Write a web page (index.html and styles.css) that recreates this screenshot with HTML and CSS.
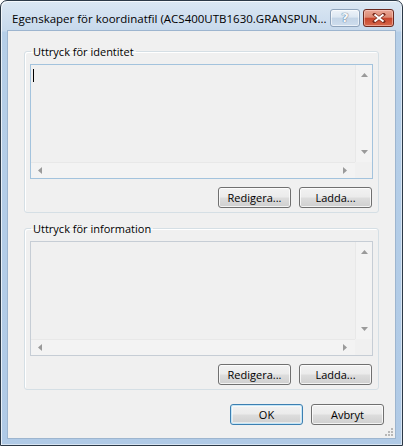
FILE: index.html
```html
<!DOCTYPE html>
<html lang="sv">
<head>
<meta charset="utf-8">
<title>Egenskaper för koordinatfil</title>
<link rel="stylesheet" href="styles.css">
</head>
<body>
<div class="window">
  <div class="titlebar">
    <span class="title">Egenskaper för koordinatfil (ACS400UTB1630.GRANSPUN...</span>
    <div class="caption-buttons">
      <span class="cbtn help">?</span>
      <span class="cbtn close">
        <svg width="14" height="10" viewBox="0 0 14 10"><path d="M2.5 1.5 L11.5 8.5 M11.5 1.5 L2.5 8.5" stroke="#7a2a1c" stroke-width="3.4" stroke-linecap="square"/><path d="M2.5 1.5 L11.5 8.5 M11.5 1.5 L2.5 8.5" stroke="#ffffff" stroke-width="2"/></svg>
      </span>
    </div>
  </div>
  <div class="client">
    <fieldset class="group">
      <legend>Uttryck för identitet</legend>
      <div class="textbox focused">
        <div class="text-content"><span class="caret"></span></div>
        <div class="vscroll">
          <svg width="7" height="4" viewBox="0 0 7 4"><path d="M0 4 L3.5 0 L7 4 Z" fill="#9a9a9a"/></svg>
          <svg width="7" height="4" viewBox="0 0 7 4"><path d="M0 0 L3.5 4 L7 0 Z" fill="#9a9a9a"/></svg>
        </div>
        <div class="hscroll">
          <svg width="4" height="7" viewBox="0 0 4 7"><path d="M4 0 L0 3.5 L4 7 Z" fill="#9a9a9a"/></svg>
          <svg width="4" height="7" viewBox="0 0 4 7"><path d="M0 0 L4 3.5 L0 7 Z" fill="#9a9a9a"/></svg>
        </div>
        <div class="corner"></div>
      </div>
      <div class="button-row">
        <button class="btn">Redigera...</button>
        <button class="btn">Ladda...</button>
      </div>
    </fieldset>
    <fieldset class="group second">
      <legend>Uttryck för information</legend>
      <div class="textbox">
        <div class="text-content"></div>
        <div class="vscroll">
          <svg width="7" height="4" viewBox="0 0 7 4"><path d="M0 4 L3.5 0 L7 4 Z" fill="#9a9a9a"/></svg>
          <svg width="7" height="4" viewBox="0 0 7 4"><path d="M0 0 L3.5 4 L7 0 Z" fill="#9a9a9a"/></svg>
        </div>
        <div class="hscroll">
          <svg width="4" height="7" viewBox="0 0 4 7"><path d="M4 0 L0 3.5 L4 7 Z" fill="#9a9a9a"/></svg>
          <svg width="4" height="7" viewBox="0 0 4 7"><path d="M0 0 L4 3.5 L0 7 Z" fill="#9a9a9a"/></svg>
        </div>
        <div class="corner"></div>
      </div>
      <div class="button-row">
        <button class="btn">Redigera...</button>
        <button class="btn">Ladda...</button>
      </div>
    </fieldset>
    <div class="dialog-buttons">
      <button class="btn default">OK</button>
      <button class="btn">Avbryt</button>
    </div>
    <div class="grip">
      <svg width="9" height="9" viewBox="0 0 9 9">
        <g fill="#b8b8b8">
          <rect x="6" y="0" width="2" height="2"/>
          <rect x="3" y="3" width="2" height="2"/><rect x="6" y="3" width="2" height="2"/>
          <rect x="0" y="6" width="2" height="2"/><rect x="3" y="6" width="2" height="2"/><rect x="6" y="6" width="2" height="2"/>
        </g>
      </svg>
    </div>
  </div>
</div>
</body>
</html>
```

FILE: styles.css
```css
* { box-sizing: border-box; }
html, body { margin: 0; padding: 0; background: #ffffff; }
body {
  font-family: "Open Sans", "Noto Sans", "Liberation Sans", sans-serif;
  font-size: 11px;
  color: #000;
}
.window {
  width: 403px;
  height: 446px;
  border: 1px solid #2c3947;
  border-radius: 7px 7px 0 0;
  background: linear-gradient(180deg, #dbe7f3 0px, #c7d9ec 30px, #b6cfe8 31px, #b0cae6 100%);
  padding: 0 7px 7px 7px;
  display: flex;
  flex-direction: column;
  box-shadow: inset 1px 1px 0 rgba(255,255,255,0.7), inset -1px -1px 0 rgba(255,255,255,0.5);
}
.titlebar {
  height: 30px;
  display: flex;
  align-items: flex-start;
  justify-content: space-between;
  flex: none;
}
.title {
  padding: 10px 0 0 4px;
  font-size: 11.5px;
  line-height: 16px;
  color: #000;
  white-space: nowrap;
}
.caption-buttons {
  display: flex;
  gap: 3px;
  padding-top: 8px;
  margin-right: 1px;
}
.cbtn {
  height: 18px;
  border-radius: 3px;
  display: flex;
  align-items: center;
  justify-content: center;
}
.help {
  width: 30px;
  border: 1px solid #8ea3bb;
  background: linear-gradient(180deg, #edf3f9 0%, #dce7f2 45%, #c3d4e6 50%, #cfdeee 100%);
  box-shadow: inset 0 0 0 1px rgba(255,255,255,0.6);
  color: #f5f8fb;
  font-family: "DejaVu Sans", sans-serif;
  font-size: 13px;
  font-weight: bold;
  text-shadow: 0 0 1px #4e6a8a, 0 0 1px #4e6a8a;
  line-height: 16px;
}
.close {
  width: 31px;
  border: 1px solid #6b2a20;
  background: linear-gradient(180deg, #e9a696 0%, #dc8a74 45%, #c8452c 52%, #d6694c 100%);
  box-shadow: inset 0 0 0 1px rgba(255,210,200,0.55);
}
.client {
  flex: 1;
  background: #f0f0f0;
  display: flex;
  flex-direction: column;
  position: relative;
  box-shadow: 0 0 0 1px #9db5cf;
}
.group {
  margin: 13px 0 0 16px;
  width: 355px;
  border: 1px solid #d5dfe5;
  border-radius: 3px;
  padding: 5px 5px 4px 5px;
  box-shadow: inset 1px 1px 0 #fff;
  min-width: 0;
}
.group.second { margin-top: 8px; }
.group legend {
  padding: 0 2px;
  margin-left: 1px;
  font-size: 11px;
  line-height: 15px;
  height: 15px;
}
.textbox {
  width: 343px;
  height: 115px;
  border: 1px solid #c6cdd5;
  display: grid;
  grid-template-columns: 1fr 17px;
  grid-template-rows: 1fr 16px;
  background: #f0f0f0;
}
.textbox.focused { border-color: #a3c3dd; }
.text-content { position: relative; padding: 2px 1px; }
.caret {
  display: block;
  width: 1px;
  height: 13px;
  margin: 2px 0 0 1px;
  background: #000;
}
.vscroll {
  background: #f3f3f3;
  border-left: 1px solid #e8e8e8;
  display: flex;
  flex-direction: column;
  justify-content: space-between;
  align-items: center;
  padding: 8px 0 8px 0;
}
.hscroll {
  background: #f3f3f3;
  border-top: 1px solid #e8e8e8;
  display: flex;
  justify-content: space-between;
  align-items: center;
  padding: 0 8px 0 7px;
}
.corner { background: #f0f0f0; }
.button-row {
  display: flex;
  justify-content: flex-end;
  gap: 8px;
  margin-top: 8px;
  padding-right: 1px;
}
.btn {
  width: 73px;
  height: 21px;
  padding: 0;
  border: 1px solid #707070;
  border-radius: 3px;
  background: linear-gradient(180deg, #f2f2f2 0%, #ebebeb 48%, #dddddd 52%, #cfcfcf 100%);
  box-shadow: inset 0 0 0 1px rgba(255,255,255,0.75);
  font-family: "Open Sans", "Noto Sans", "Liberation Sans", sans-serif;
  font-size: 11px;
  line-height: 17px;
  color: #000;
}
.btn.default {
  border-color: #3c7fb1;
  box-shadow: inset 0 0 0 1px #c5e6f7, inset 0 0 0 2px rgba(255,255,255,0.5);
}
.dialog-buttons {
  display: flex;
  justify-content: flex-end;
  gap: 8px;
  margin-top: 14px;
  padding-right: 11px;
}
.grip {
  position: absolute;
  right: 1px;
  bottom: 1px;
  width: 9px;
  height: 9px;
  display: flex;
}
```
